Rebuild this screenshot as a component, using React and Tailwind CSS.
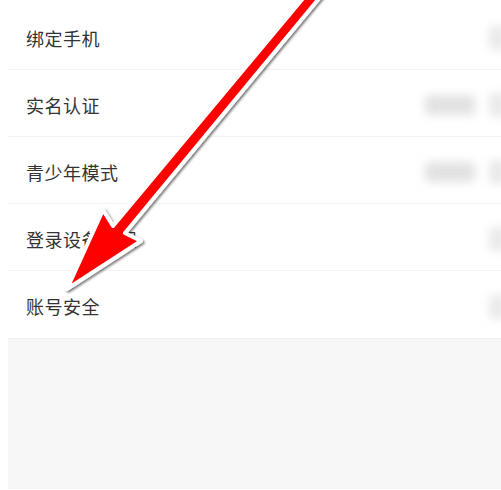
import React from 'react';

const rows = [
  { label: '绑定手机', tag: false },
  { label: '实名认证', tag: true },
  { label: '青少年模式', tag: true },
  { label: '登录设备管理', tag: false },
  { label: '账号安全', tag: false },
];

const Row = ({ label, tag, last }) => (
  <div
    className={`flex h-[67px] items-center justify-between pl-[18px] pt-[4px] ${
      last ? '' : 'border-b border-[#f3f3f3]'
    }`}
  >
    <span className="text-[18px] tracking-[0.5px] text-[#333333]">{label}</span>
    <div className="mr-[-6px] flex items-center gap-[14px]">
      {tag && <div className="h-[20px] w-[50px] rounded bg-[#e2e2e2] blur-[5px]" />}
      <div className="h-[24px] w-[18px] rounded bg-[#eaeaea] blur-[5px]" />
    </div>
  </div>
);

// red pointer drawn over the list
const Arrow = () => (
  <svg className="pointer-events-none absolute left-0 top-0" width="501" height="490" viewBox="0 0 501 490">
    <defs>
      <filter id="shadow" x="-20%" y="-20%" width="140%" height="140%">
        <feDropShadow dx="1.5" dy="1.5" stdDeviation="1" floodColor="#000" floodOpacity="0.55" />
      </filter>
    </defs>
    <polygon
      points="310,-10 113,226 103,210 67,289 141,241 125,233 326,-10"
      fill="#ff0000"
      stroke="#ffffff"
      strokeWidth="4"
      strokeLinejoin="round"
      filter="url(#shadow)"
    />
  </svg>
);

export default function App() {
  return (
    <div
      className="relative flex h-[490px] w-[501px] flex-col overflow-hidden bg-white pb-px pl-2"
      style={{ fontFamily: '"Noto Sans CJK SC", "Noto Sans", sans-serif' }}
    >
      <div className="pt-[3px]">
        {rows.map((r, i) => (
          <Row key={r.label} {...r} last={i === rows.length - 1} />
        ))}
      </div>
      <div className="flex-1 border-t border-[#f0f0f0] bg-[#f7f7f7]" />
      <Arrow />
    </div>
  );
}
